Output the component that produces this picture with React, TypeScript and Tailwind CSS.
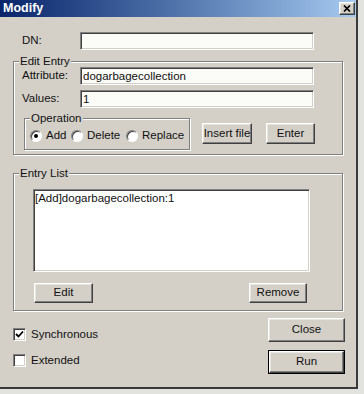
const raised =
  "border border-t-white border-l-white border-r-[#404040] border-b-[#404040] shadow-[inset_-1px_-1px_0_#808080,inset_1px_1px_0_#e8e6e0]";
const sunken =
  "border border-t-[#808080] border-l-[#808080] border-r-white border-b-white shadow-[inset_1px_1px_0_#404040,inset_-1px_-1px_0_#d4d0c8]";
const etched = "border border-[#808080] shadow-[inset_1px_1px_0_#fff,1px_1px_0_#fff]";

function Group({ label, className, children }: { label: string; className: string; children: React.ReactNode }) {
  return (
    <div className={`relative ${etched} ${className}`}>
      <span className="absolute left-[5px] top-[-7px] bg-[#d4d0c8] px-[1px] leading-[13px]">{label}</span>
      {children}
    </div>
  );
}

function TextBox({ value, width = "w-[234px]" }: { value?: string; width?: string }) {
  return (
    <div className={`${sunken} ${width} flex h-[18px] items-center bg-[#fbfbf8] pl-[2px] leading-[13px]`}>
      {value}
    </div>
  );
}

function Button({ label, className, isDefault }: { label: string; className: string; isDefault?: boolean }) {
  if (isDefault) {
    return (
      <div className={`border border-black ${className}`}>
        <div className={`${raised} flex h-full w-full items-center justify-center`}>{label}</div>
      </div>
    );
  }
  return <div className={`${raised} flex items-center justify-center ${className}`}>{label}</div>;
}

function Radio({ label, checked, className }: { label: string; checked?: boolean; className: string }) {
  return (
    <div className={`flex items-center gap-[4px] ${className}`}>
      <span className="flex h-[12px] w-[12px] items-center justify-center rounded-full border border-t-[#808080] border-l-[#808080] border-r-white border-b-white bg-white shadow-[inset_1px_1px_0_#404040]">
        {checked && <span className="h-[4px] w-[4px] rounded-full bg-black" />}
      </span>
      <span>{label}</span>
    </div>
  );
}

function Check({ label, checked }: { label: string; checked?: boolean }) {
  return (
    <div className="flex items-center gap-[5px]">
      <span className={`${sunken} flex h-[13px] w-[13px] items-center justify-center bg-white`}>
        {checked && (
          <svg width="9" height="9" viewBox="0 0 9 9">
            <path d="M1 4 L3.5 6.5 L8 1.5" fill="none" stroke="#000" strokeWidth="1.8" />
          </svg>
        )}
      </span>
      <span>{label}</span>
    </div>
  );
}

export default function App() {
  return (
    <div className="h-[394px] w-[364px] overflow-hidden bg-[#e2e2de] font-['Liberation_Sans',Arial,sans-serif] text-[11.5px] text-[#111]">
      <div className="flex h-[389px] w-[358px] flex-col border-r-2 border-b-2 border-[#3a3a3a] bg-[#d4d0c8]">
        <div className="flex h-[17px] items-center justify-between bg-gradient-to-r from-[#0a246a] to-[#a6caf0] pl-[3px] pr-[1px]">
          <span className="text-[12.5px] font-bold leading-[15px] text-white">Modify</span>
          <div className={`${raised} flex h-[13px] w-[16px] items-center justify-center bg-[#d4d0c8]`}>
            <svg width="8" height="7" viewBox="0 0 8 7">
              <path d="M1 0.5 L7 6.5 M7 0.5 L1 6.5" stroke="#000" strokeWidth="1.7" />
            </svg>
          </div>
        </div>

        <div className="pl-[13px]">
          <div className="mt-[15px] flex h-[18px] items-center">
            <span className="w-[67px] pl-[9px]">DN:</span>
            <TextBox />
          </div>

          <Group label="Edit Entry" className="mt-[11px] h-[94px] w-[330px] pl-[8px] pt-[5px]">
            <div className="flex h-[18px] items-center">
              <span className="w-[58px]">Attribute:</span>
              <TextBox value="dogarbagecollection" />
            </div>
            <div className="mt-[5px] flex h-[18px] items-center">
              <span className="w-[58px]">Values:</span>
              <TextBox value="1" />
            </div>
            <div className="mt-[10px] flex items-start">
              <Group label="Operation" className="ml-[2px] h-[32px] w-[166px] pl-[5px] pt-[10px]">
                <div className="flex h-[13px] items-center">
                  <Radio label="Add" checked className="w-[41px]" />
                  <Radio label="Delete" className="w-[55px]" />
                  <Radio label="Replace" className="" />
                </div>
              </Group>
              <Button label="Insert file" className="ml-[12px] mt-[5px] h-[21px] w-[50px]" />
              <Button label="Enter" className="ml-[14px] mt-[5px] h-[21px] w-[49px]" />
            </div>
          </Group>

          <Group label="Entry List" className="mt-[18px] h-[138px] w-[330px] pl-[19px] pt-[15px]">
            <div className={`${sunken} h-[83px] w-[277px] bg-white pl-[1px] pt-[1px] leading-[14px]`}>
              [Add]dogarbagecollection:1
            </div>
            <div className="mt-[11px] flex">
              <Button label="Edit" className="ml-[1px] h-[20px] w-[59px]" />
              <Button label="Remove" className="ml-[156px] h-[20px] w-[58px]" />
            </div>
          </Group>

          <div className="mt-[7px] flex w-[332px] justify-between">
            <div className="flex flex-col gap-[9px] pt-[8px]">
              <Check label="Synchronous" checked />
              <Check label="Extended" />
            </div>
            <div className="flex flex-col gap-[8px]">
              <Button label="Close" className="h-[24px] w-[77px]" />
              <Button label="Run" isDefault className="h-[24px] w-[77px]" />
            </div>
          </div>
        </div>
      </div>
    </div>
  );
}
